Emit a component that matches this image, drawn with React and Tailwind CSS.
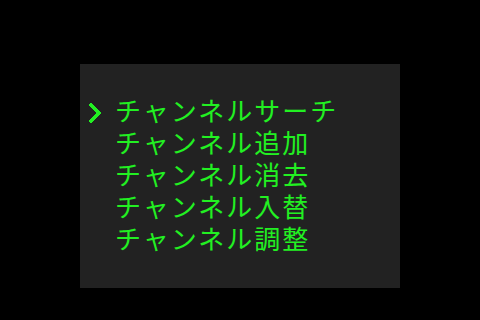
import React from "react";

const items = [
  "チャンネルサーチ",
  "チャンネル追加",
  "チャンネル消去",
  "チャンネル入替",
  "チャンネル調整",
];

function Cursor() {
  return (
    <svg width="16" height="32" viewBox="0 0 16 32" className="shrink-0">
      <polyline
        points="3,11 11,19 3,27"
        fill="none"
        stroke="#22f022"
        strokeWidth="3"
        strokeLinecap="square"
        shapeRendering="crispEdges"
      />
    </svg>
  );
}

export default function App() {
  return (
    <div className="w-[480px] h-[320px] bg-black flex justify-center pt-[64px]">
      <div className="w-[320px] h-[224px] bg-[#222222] pt-[30px] pl-[8px]">
        <ul
          className="text-[#22f022] text-[26px] leading-[32px] tracking-[2px]"
          style={{ fontFamily: '"Noto Sans CJK JP", "Noto Sans", sans-serif' }}
        >
          {items.map((label, i) => (
            <li key={label} className="flex items-start h-[32px]">
              <span className="w-[27px] shrink-0">{i === 0 && <Cursor />}</span>
              <span>{label}</span>
            </li>
          ))}
        </ul>
      </div>
    </div>
  );
}
